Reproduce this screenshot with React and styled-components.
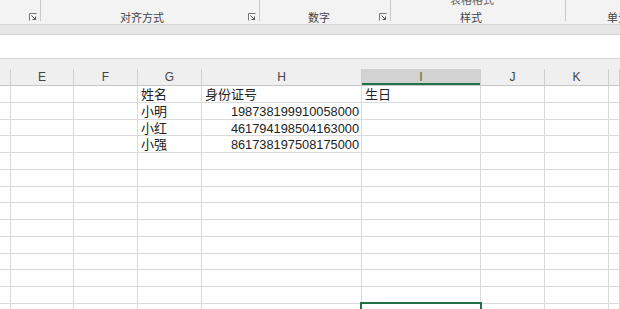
import styled, { createGlobalStyle } from "styled-components";

const Global = createGlobalStyle`
    body {
        margin: 0;
        background: #fff;
        font-family: "Liberation Sans", "Noto Sans CJK SC", sans-serif;
    }
`;

const Page = styled.div`
    width: 620px;
    height: 309px;
    overflow: hidden;
    display: flex;
    flex-direction: column;
`;

const Ribbon = styled.div`
    height: 24px;
    flex-shrink: 0;
    background: #f3f3f3;
    border-bottom: 1px solid #d6d6d6;
    display: flex;
    overflow: hidden;
`;

const Group = styled.div`
    position: relative;
    width: ${p => p.w}px;
    flex-shrink: 0;
    height: 21px;
    border-right: ${p => (p.last ? "none" : "1px solid #c8c8c8")};
    display: flex;
    flex-direction: column;
    justify-content: flex-end;
    align-items: center;
    font-family: "Noto Sans CJK SC", sans-serif;
    font-size: 11px;
    color: #444;
    line-height: 14px;
`;

const GroupLabel = styled.div`
    margin-bottom: -3px;
    margin-left: ${p => p.shift || 0}px;
    white-space: nowrap;
`;

const TopLabel = styled.div`
    position: absolute;
    top: -8px;
    left: 0;
    right: 12px;
    text-align: center;
    color: #666;
`;

const Launcher = styled.svg`
    position: absolute;
    right: 3px;
    bottom: 0;
`;

const Band = styled.div`
    height: ${p => p.h}px;
    flex-shrink: 0;
    background: ${p => p.bg};
    border-bottom: 1px solid ${p => p.line};
`;

const HeaderRow = styled.div`
    display: flex;
    height: 16px;
    flex-shrink: 0;
    background: #efefef;
    border-bottom: 1px solid #c6c6c6;
`;

const ColHead = styled.div`
    width: ${p => p.w}px;
    flex-shrink: 0;
    box-sizing: border-box;
    border-right: 1px solid #cfcfcf;
    background: ${p => (p.active ? "#d2d2d2" : "transparent")};
    box-shadow: ${p => (p.active ? "inset 0 -2px 0 #217346" : "none")};
    text-align: center;
    font-size: 12px;
    line-height: 16px;
    color: ${p => (p.active ? "#217346" : "#444")};
    ${p => p.fill && "flex: 1;"}
`;

const Row = styled.div`
    display: flex;
    height: 16.75px;
    flex-shrink: 0;
`;

const Cell = styled.div`
    position: relative;
    width: ${p => p.w}px;
    flex-shrink: 0;
    box-sizing: border-box;
    border-right: 1px solid #dadada;
    border-bottom: 1px solid #dadada;
    padding: 0 2px 0 3px;
    font-family: "Noto Sans CJK SC", sans-serif;
    font-size: 13px;
    line-height: 15.75px;
    color: #222;
    white-space: nowrap;
    text-align: ${p => (p.num ? "right" : "left")};
    ${p => p.fill && "flex: 1;"}
`;

const Num = styled.span`
    font-family: "Liberation Sans", sans-serif;
    font-size: 12.8px;
`;

const Selection = styled.div`
    position: absolute;
    top: -2px;
    left: -2px;
    right: -2px;
    bottom: -2px;
    border: 2px solid #217346;
`;

const cols = [
    { id: "D", w: 11 },
    { id: "E", w: 63 },
    { id: "F", w: 64 },
    { id: "G", w: 64 },
    { id: "H", w: 160 },
    { id: "I", w: 119 },
    { id: "J", w: 64 },
    { id: "K", w: 64 },
    { id: "L", w: 12 },
];

const data = [
    { G: "姓名", H: "身份证号", I: "生日" },
    { G: "小明", H: "198738199910058000" },
    { G: "小红", H: "461794198504163000" },
    { G: "小强", H: "861738197508175000" },
];

function LauncherIcon() {
    return (
        <Launcher width="8" height="8" viewBox="0 0 8 8">
            <path d="M0.5 7.5V0.5H7.5" fill="none" stroke="#777" strokeWidth="1" />
            <path d="M2.5 2.5L6.5 6.5M6.5 3.5V6.5H3.5" fill="none" stroke="#555" strokeWidth="1" />
        </Launcher>
    );
}

export default function App() {
    const rows = Array.from({ length: 15 }, (_, i) => data[i] || {});
    return (
        <Page>
            <Global />
            <Ribbon>
                <Group w={40}>
                    <LauncherIcon />
                </Group>
                <Group w={218}>
                    <GroupLabel shift={-16}>对齐方式</GroupLabel>
                    <LauncherIcon />
                </Group>
                <Group w={130}>
                    <GroupLabel shift={-12}>数字</GroupLabel>
                    <LauncherIcon />
                </Group>
                <Group w={174}>
                    <TopLabel>表格格式</TopLabel>
                    <GroupLabel shift={-14}>样式</GroupLabel>
                </Group>
                <Group w={100} last>
                    <GroupLabel style={{ alignSelf: "flex-start", marginLeft: 41 }}>单元格</GroupLabel>
                </Group>
            </Ribbon>
            <Band h={9} bg="#e6e6e6" line="#d2d2d2" />
            <Band h={23} bg="#ffffff" line="#d4d4d4" />
            <Band h={9} bg="#efefef" line="#efefef" />
            <HeaderRow>
                {cols.map(c => (
                    <ColHead key={c.id} w={c.w} active={c.id === "I"} fill={c.id === "L"}>
                        {c.id === "D" || c.id === "L" ? "" : c.id}
                    </ColHead>
                ))}
            </HeaderRow>
            {rows.map((r, i) => (
                <Row key={i}>
                    {cols.map(c => {
                        const v = r[c.id];
                        const isNum = v && /^\d+$/.test(v);
                        return (
                            <Cell key={c.id} w={c.w} num={isNum} fill={c.id === "L"}>
                                {isNum ? <Num>{v}</Num> : v}
                                {i === 13 && c.id === "I" && <Selection />}
                            </Cell>
                        );
                    })}
                </Row>
            ))}
        </Page>
    );
}
